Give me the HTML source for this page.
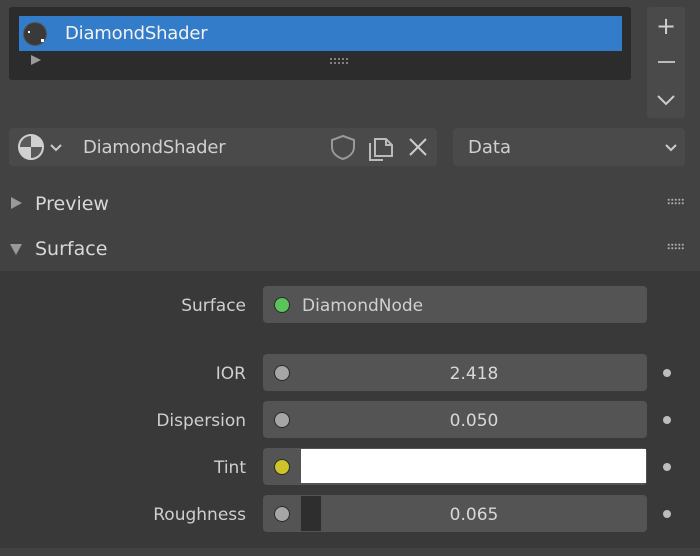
<!DOCTYPE html>
<html><head><style>
*{margin:0;padding:0;box-sizing:border-box}
body{width:700px;height:556px;background:#424242;font-family:"DejaVu Sans","Liberation Sans",sans-serif;color:#dcdcdc;position:relative;overflow:hidden}
.a{position:absolute}
.fld{position:absolute;left:263px;width:384px;height:37px;background:#545454;border-radius:4px}
.lbl{position:absolute;right:454px;font-size:17px;color:#cfcfcf;width:200px;text-align:right}
.dot{position:absolute;left:11px;top:11px;width:16px;height:16px;border-radius:50%;background:#a6a6a6;border:1px solid #2a2a2a}
.val{position:absolute;left:38px;right:0;top:10px;text-align:center;font-size:17px;color:#d8d8d8}
.kd{position:absolute;left:663px;width:8px;height:8px;border-radius:50%;background:#bdbdbd}
.grip{position:absolute;left:667px;width:18px;height:7px;background:radial-gradient(circle,#aaa 0.9px,transparent 1.2px) 0 0/3.5px 3.5px}
</style></head><body>
<div class="a" style="left:9px;top:7px;width:622px;height:73px;background:#2c2c2c;border-radius:3px"></div>
<div class="a" style="left:19px;top:16px;width:603px;height:35px;background:#337cc9"></div>
<div class="a" style="left:23px;top:22px;width:24px;height:24px;border-radius:50%;background:#3a3a3a;border:1px solid #555"></div>
<div class="a" style="left:28px;top:31px;width:2px;height:2px;background:#fff"></div>
<div class="a" style="left:41px;top:39px;width:3px;height:3px;background:#fff"></div>
<div class="a" style="left:65px;top:23px;font-size:18px;color:#f2f2f2;letter-spacing:-0.2px">DiamondShader</div>
<div class="a" style="left:31px;top:55px;width:0;height:0;border-left:10px solid #9a9a9a;border-top:5px solid transparent;border-bottom:5px solid transparent"></div>
<div class="a" style="left:329px;top:57px;width:20px;height:8px;background:radial-gradient(circle,#999 0.8px,transparent 1.1px) 0 0/4px 4px"></div>
<div class="a" style="left:647px;top:7px;width:38px;height:111px;background:#4a4a4a;border-radius:4px"></div>
<div class="a" style="left:656px;top:12px;font-size:24px;color:#cfcfcf">+</div>
<div class="a" style="left:658px;top:61px;width:17px;height:2px;background:#bbb"></div>
<svg class="a" style="left:655px;top:92px" width="22" height="16"><path d="M3 4l8 8 8-8" stroke="#ccc" stroke-width="2" fill="none"/></svg>

<div class="a" style="left:9px;top:128px;width:428px;height:38px;background:#4a4a4a;border-radius:4px"></div>
<svg class="a" style="left:17px;top:133px" width="30" height="28"><circle cx="14" cy="14" r="12" fill="#d0d0d0"/><path d="M14 2A12 12 0 0 0 2 14H14Z" fill="#5a5a5a"/><path d="M14 14H26A12 12 0 0 1 14 26Z" fill="#5a5a5a"/><circle cx="14" cy="14" r="12" fill="none" stroke="#d0d0d0" stroke-width="2"/></svg>
<svg class="a" style="left:48px;top:140px" width="16" height="14"><path d="M3 5l5 5 5-5" stroke="#ccc" stroke-width="2" fill="none"/></svg>
<div class="a" style="left:83px;top:137px;font-size:18px;color:#d0d0d0;letter-spacing:-0.2px">DiamondShader</div>
<svg class="a" style="left:329px;top:133px" width="28" height="28"><path d="M14 3L25 7V14C25 20 20 24 14 26C8 24 3 20 3 14V7Z" stroke="#999" stroke-width="2" fill="none"/></svg>
<svg class="a" style="left:366px;top:133px" width="30" height="28"><path d="M9 6H20L26 12V23H9Z M20 6V12H26" stroke="#bbb" stroke-width="2" fill="none"/><path d="M4 10V27H17" stroke="#bbb" stroke-width="2" fill="none"/></svg>
<svg class="a" style="left:407px;top:136px" width="22" height="22"><path d="M3 3L19 19M19 3L3 19" stroke="#ccc" stroke-width="2"/></svg>
<div class="a" style="left:453px;top:128px;width:232px;height:38px;background:#4a4a4a;border-radius:4px"></div>
<div class="a" style="left:468px;top:137px;font-size:18px;color:#d0d0d0">Data</div>
<svg class="a" style="left:663px;top:140px" width="16" height="14"><path d="M3 5l5 5 5-5" stroke="#ccc" stroke-width="2" fill="none"/></svg>

<div class="a" style="left:11px;top:197px;width:0;height:0;border-left:11px solid #999;border-top:6px solid transparent;border-bottom:6px solid transparent"></div>
<div class="a" style="left:35px;top:193px;font-size:19px;color:#d8d8d8">Preview</div>
<div class="a" style="left:10px;top:244px;width:0;height:0;border-top:11px solid #999;border-left:6px solid transparent;border-right:6px solid transparent"></div>
<div class="a" style="left:35px;top:238px;font-size:19px;color:#d8d8d8">Surface</div>
<div class="grip" style="top:198px"></div>
<div class="grip" style="top:243px"></div>

<div class="a" style="left:0;top:271px;width:700px;height:277px;background:#393939"></div>

<div class="lbl" style="top:296px">Surface</div>
<div class="fld" style="top:286px"><div class="dot" style="background:#5ac35a"></div><div class="a" style="left:39px;top:10px;font-size:17px;color:#d0d0d0">DiamondNode</div></div>

<div class="lbl" style="top:364px">IOR</div>
<div class="fld" style="top:354px"><div class="dot"></div><div class="val">2.418</div></div>
<div class="kd" style="top:369px"></div>

<div class="lbl" style="top:411px">Dispersion</div>
<div class="fld" style="top:401px"><div class="dot"></div><div class="val">0.050</div></div>
<div class="kd" style="top:416px"></div>

<div class="lbl" style="top:458px">Tint</div>
<div class="fld" style="top:448px"><div class="dot" style="background:#cdc42a"></div><div class="a" style="left:38px;top:1px;right:1px;bottom:2px;background:#fff"></div></div>
<div class="kd" style="top:463px"></div>

<div class="lbl" style="top:505px">Roughness</div>
<div class="fld" style="top:495px"><div class="dot"></div><div class="a" style="left:38px;top:1px;width:20px;bottom:1px;background:#2e2e2e"></div><div class="val">0.065</div></div>
<div class="kd" style="top:510px"></div>
</body></html>
